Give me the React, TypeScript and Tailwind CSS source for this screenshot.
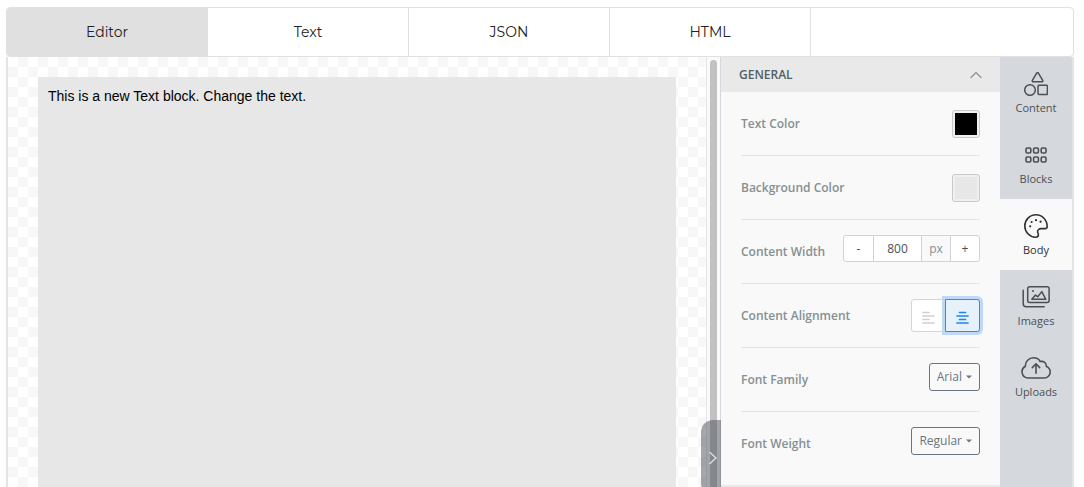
import { useState } from 'react';
import type { ReactNode } from 'react';

const tabs = ['Editor', 'Text', 'JSON', 'HTML'];

const iconProps = {
  fill: 'none',
  stroke: 'currentColor',
  strokeLinecap: 'round' as const,
  strokeLinejoin: 'round' as const,
};

const ContentIcon = () => (
  <svg width="24" height="24" viewBox="0 0 24 24" strokeWidth="1.5" {...iconProps}>
    <path d="M12.7 1.1a1 1 0 0 1 1.7 0l4.300 7.200a1 1 0 0 1-.8 1.500H9.200a1 1 0 0 1-.8-1.500z" />
    <circle cx="6" cy="18" r="5.3" />
    <rect x="14" y="13.2" width="9.4" height="9.4" rx="1" />
  </svg>
);

const BlocksIcon = () => (
  <svg width="22" height="16" viewBox="0 0 22 16" strokeWidth="1.6" {...iconProps}>
    {[1, 8.6, 16.2].map((x) => (
      <g key={x}>
        <rect x={x} y="1" width="4.8" height="5" rx="1.2" />
        <rect x={x} y="10" width="4.8" height="5" rx="1.2" />
      </g>
    ))}
  </svg>
);

const BodyIcon = () => (
  <svg width="24" height="24" viewBox="0 0 24 24" strokeWidth="1.6" {...iconProps}>
    <path d="M12 .8C5.600 .8.8 5.800 .8 12c0 6 4.700 11 10.700 11.200 1.700 0 2.900-1 2.900-2.500 0-1.200-.8-1.700-.8-2.900 0-1.900 1.500-3.200 3.400-3.200h4.300c1.200 0 1.900-.8 1.900-2C23.200 6 18.200.8 12 .8z" />
    <g fill="currentColor" stroke="none">
      <circle cx="6.200" cy="12.300" r="1.100" />
      <circle cx="7.600" cy="8" r="1.100" />
      <circle cx="12" cy="6.200" r="1.100" />
      <circle cx="16.600" cy="7.700" r="1.100" />
    </g>
  </svg>
);

const ImagesIcon = () => (
  <svg width="28" height="22" viewBox="0 0 28 22" strokeWidth="1.5" {...iconProps}>
    <rect x="5.700" y=".8" width="21.400" height="15.800" rx="2" />
    <path d="M1.200 4.200v13.600a3 3 0 0 0 3 3h18" />
    <path d="M9.800 13.300l3.700-4.200 2.300 1.700 4-5.200 4 7.700z" />
    <circle cx="11" cy="5" r="1" fill="currentColor" stroke="none" />
  </svg>
);

const UploadsIcon = () => (
  <svg width="30" height="22" viewBox="0 0 30 22" strokeWidth="1.6" {...iconProps}>
    <path d="M7 21a6.200 6.200 0 0 1-2.600-11.700C4 4.600 8 .8 12.500 .8c3 0 5.400 1.300 6.700 3.700 3.600-.8 6.300 1.500 6.200 4.900 2.200.9 3.800 3 3.800 5.500 0 3.400-2.700 6.100-6.100 6.100z" />
    <path d="M15 16.200V7.200M11.300 10.600L15 6.800l3.700 3.800" />
  </svg>
);

const tools = [
  { name: 'Content', icon: <ContentIcon /> },
  { name: 'Blocks', icon: <BlocksIcon /> },
  { name: 'Body', icon: <BodyIcon /> },
  { name: 'Images', icon: <ImagesIcon /> },
  { name: 'Uploads', icon: <UploadsIcon /> },
];

const Row = ({ label, htmlFor, children }: { label: string; htmlFor: string; children: ReactNode }) => (
  <div className="mx-5 flex h-16 items-center justify-between border-b border-[#e1e3e5] last:border-transparent">
    <label htmlFor={htmlFor} className="text-xs font-semibold text-[#859093]">
      {label}
    </label>
    {children}
  </div>
);

const Swatch = ({ id, initial }: { id: string; initial: string }) => {
  const [color, setColor] = useState(initial);
  return (
    <span className="flex size-7 rounded-[3px] border border-[#c6c8ca] bg-[#f0f0f0] p-0.5">
      <input
        id={id}
        type="color"
        value={color}
        onChange={(e) => setColor(e.target.value)}
        className="size-full cursor-pointer appearance-none [&::-webkit-color-swatch]:rounded-none [&::-webkit-color-swatch]:border-0 [&::-webkit-color-swatch-wrapper]:p-0"
      />
    </span>
  );
};

const Dropdown = ({ id, options }: { id: string; options: string[] }) => (
  <div className="relative mb-1.5 flex text-[#6c757d]">
    <select
      id={id}
      className="field-sizing-content h-7 appearance-none rounded-[3px] border border-current pr-[17px] pl-[7px] text-xs"
    >
      {options.map((o) => (
        <option key={o}>{o}</option>
      ))}
    </select>
    <svg className="pointer-events-none absolute top-3 right-2" width="6" height="4" viewBox="0 0 6 4">
      <path d="M0 .5h6L3 3.500z" fill="currentColor" />
    </svg>
  </div>
);

export default function App() {
  const [tab, setTab] = useState('Editor');
  const [tool, setTool] = useState('Body');
  const [width, setWidth] = useState(800);
  const [align, setAlign] = useState('center');

  return (
    <div className="flex h-screen flex-col overflow-hidden bg-white pt-[7px] pr-2.5 pl-1.5 font-['Open_Sans',sans-serif]">
      {/* Tabs */}
      <div className="flex h-[50px] shrink-0 overflow-hidden rounded border border-[#e0e0e5] font-[Montserrat,Inter,sans-serif]">
        {tabs.map((t) => (
          <button
            key={t}
            onClick={() => setTab(t)}
            className={`w-[201px] border-r border-[#dedee3] text-sm text-[#222] ${t === tab ? 'bg-[#e0e0e0]' : 'bg-white'}`}
          >
            {t}
          </button>
        ))}
      </div>

      <div className="flex min-h-0 flex-1 border-x-2 border-[#e3e4ea]">
        {/* Canvas */}
        <main className="flex min-w-0 flex-1 bg-[conic-gradient(#f7f7f7_25%,#fff_0_50%,#f7f7f7_0_75%,#fff_0)] bg-[length:20px_20px] px-[30px] pt-5">
          <div className="flex-1 bg-[#e7e7e7] p-2.5 font-['Liberation_Sans',Arial,sans-serif] text-sm text-black">
            <p className="leading-[18px]">This is a new Text block. Change the text.</p>
          </div>
        </main>

        {/* Scrollbar and collapse handle */}
        <div className="relative flex w-[15px] shrink-0 border-x border-l-[#e6e6e8] border-r-[#d5d8dd] bg-[#fafafa] px-[3px] pt-[3px]">
          <div className="w-2 rounded-t-full bg-[#c1c1c1]" />
          <button
            aria-label="Collapse panel"
            className="absolute -right-px -bottom-2 flex h-[75px] w-5 items-center justify-end rounded-l-xl bg-[#475058]/50 pr-1 text-white/70"
          >
            <svg width="8" height="14" viewBox="0 0 8 14" strokeWidth="1.5" {...iconProps}>
              <path d="M1 1.500l6 5.500-6 5.500" />
            </svg>
          </button>
        </div>

        {/* Settings */}
        <section className="w-[279px] shrink-0 overflow-hidden bg-[#f9f9f9]">
          <button className="flex h-[35px] w-full items-center justify-between bg-[#e9e9e9] px-[18px] text-xs font-semibold text-[#505f66]">
            GENERAL
            <svg width="12" height="8" viewBox="0 0 12 8" className="text-[#8d9799]" strokeWidth="1.3" {...iconProps}>
              <path d="M1 6.500l5-5 5 5" />
            </svg>
          </button>
          <div className="pb-[9px]">
            <Row label="Text Color" htmlFor="text-color">
              <Swatch id="text-color" initial="#000000" />
            </Row>
            <Row label="Background Color" htmlFor="background-color">
              <Swatch id="background-color" initial="#e7e7e7" />
            </Row>
            <Row label="Content Width" htmlFor="content-width">
              <div className="mb-1.5 flex h-[27px] rounded-[3px] border border-[#ced4da] bg-white text-xs text-[#495057]">
                <button className="w-[29px]" onClick={() => setWidth(width - 1)}>-</button>
                <input
                  id="content-width"
                  value={width}
                  onChange={(e) => setWidth(Number(e.target.value) || 0)}
                  className="w-[49px] border-x border-[#ced4da] text-center outline-none"
                />
                <span className="flex w-7 items-center justify-center bg-[#f9f9f9] text-[#868e96]">px</span>
                <button className="w-[29px] border-l border-[#ced4da]" onClick={() => setWidth(width + 1)}>+</button>
              </div>
            </Row>
            <Row label="Content Alignment" htmlFor="align-center">
              <div className="flex">
                {['left', 'center'].map((a) => (
                  <button
                    key={a}
                    id={`align-${a}`}
                    aria-label={`Align ${a}`}
                    onClick={() => setAlign(a)}
                    className={`flex h-[33px] w-[35px] items-center justify-center border pt-1 first:-mr-px first:rounded-l-[3px] last:rounded-r-[3px] ${
                      a === align
                        ? 'z-10 border-[#2a8ff0] bg-[#e7f1fa] text-[#1b87f0] shadow-[0_0_0_3px_#bfd8f8]'
                        : 'border-[#d3d6d8] bg-white text-[#ced0d2]'
                    }`}
                  >
                    <svg width="14" height="14" viewBox="0 0 14 14" strokeWidth="1.7" {...iconProps}>
                      {a === 'left' ? (
                        <path d="M1 1.500h6M1 5h11M1 8.500h6M1 12h11" />
                      ) : (
                        <path d="M3.500 1.500h6M1 5h11M3.500 8.500h6M1 12h11" />
                      )}
                    </svg>
                  </button>
                ))}
              </div>
            </Row>
            <Row label="Font Family" htmlFor="font-family">
              <Dropdown id="font-family" options={['Arial', 'Georgia', 'Verdana']} />
            </Row>
            <Row label="Font Weight" htmlFor="font-weight">
              <Dropdown id="font-weight" options={['Regular', 'Bold']} />
            </Row>
          </div>
          <div className="h-9 bg-[#e9e9e9]" />
        </section>

        {/* Tools */}
        <nav className="flex w-[72px] shrink-0 flex-col bg-[#d5d8dd]">
          {tools.map((t) => (
            <button
              key={t.name}
              onClick={() => setTool(t.name)}
              className={`flex h-[71px] flex-col items-center pt-[15px] text-[11px] leading-4 ${
                t.name === tool ? 'bg-[#f9f9f9] text-[#2f3133]' : 'text-[#4b5055]'
              }`}
            >
              <span className="mb-1 flex h-6 items-center">{t.icon}</span>
              {t.name}
            </button>
          ))}
        </nav>
      </div>
    </div>
  );
}
